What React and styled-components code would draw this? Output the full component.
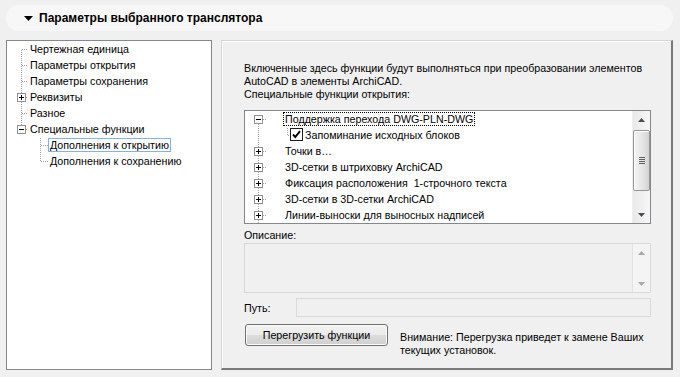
import React from 'react';
import styled, { createGlobalStyle } from 'styled-components';

const NAV_ITEMS = [
  { label: 'Чертежная единица', level: 0, pos: 'first' },
  { label: 'Параметры открытия', level: 0 },
  { label: 'Параметры сохранения', level: 0 },
  { label: 'Реквизиты', level: 0, expander: 'plus' },
  { label: 'Разное', level: 0 },
  { label: 'Специальные функции', level: 0, expander: 'minus', pos: 'last' },
  { label: 'Дополнения к открытию', level: 1, selected: true },
  { label: 'Дополнения к сохранению', level: 1, pos: 'last' },
];

const FUNCTIONS = [
  { label: 'Поддержка перехода DWG-PLN-DWG', expander: 'minus', focused: true, first: true },
  { label: 'Запоминание исходных блоков', child: true, checked: true },
  { label: 'Точки в…', expander: 'plus' },
  { label: '3D-сетки в штриховку ArchiCAD', expander: 'plus' },
  { label: 'Фиксация расположения  1-строчного текста', expander: 'plus' },
  { label: '3D-сетки в 3D-сетки ArchiCAD', expander: 'plus' },
  { label: 'Линии-выноски для выносных надписей', expander: 'plus' },
];

const DOT = '#a0a0a0';

function Dotted({ x1, y1, x2, y2 }) {
  return (
    <line
      x1={x1 + 0.5}
      y1={y1 + 0.5}
      x2={x2 + 0.5}
      y2={y2 + 0.5}
      stroke={DOT}
      strokeDasharray="1 1"
      shapeRendering="crispEdges"
    />
  );
}

function Expander({ cx, type }) {
  return (
    <g shapeRendering="crispEdges">
      <rect x={cx - 4 + 0.5} y={4.5} width={8} height={8} fill="#fff" stroke="#919191" />
      <line x1={cx - 2} y1={8.5} x2={cx + 3} y2={8.5} stroke="#000" />
      {type === 'plus' && <line x1={cx + 0.5} y1={6} x2={cx + 0.5} y2={11} stroke="#000" />}
    </g>
  );
}

function NavConnector({ item }) {
  if (item.level === 0) {
    const top = item.pos === 'first' ? 8 : 0;
    const bottom = item.pos === 'last' ? 8 : 16;
    return (
      <svg width="21" height="16">
        <Dotted x1={14} y1={top} x2={14} y2={bottom} />
        <Dotted x1={14} y1={8} x2={20} y2={8} />
        {item.expander && <Expander cx={14} type={item.expander} />}
      </svg>
    );
  }
  return (
    <svg width="41" height="16">
      <Dotted x1={33} y1={0} x2={33} y2={item.pos === 'last' ? 8 : 16} />
      <Dotted x1={33} y1={8} x2={40} y2={8} />
    </svg>
  );
}

function FunctionConnector({ item }) {
  if (item.child) {
    return (
      <svg width="45" height="16">
        <Dotted x1={13} y1={0} x2={13} y2={16} />
        <Dotted x1={42} y1={0} x2={42} y2={8} />
        <Dotted x1={42} y1={8} x2={44} y2={8} />
      </svg>
    );
  }
  return (
    <svg width="38" height="16">
      <Dotted x1={13} y1={item.first ? 8 : 0} x2={13} y2={16} />
      <Dotted x1={13} y1={8} x2={21} y2={8} />
      <Expander cx={13} type={item.expander} />
    </svg>
  );
}

function CheckBox() {
  return (
    <svg width="13" height="16" viewBox="0 0 13 16">
      <rect x="0.5" y="1.5" width="12" height="12" fill="#fff" stroke="#1c1c1c" shapeRendering="crispEdges" />
      <path d="M3 7.5 L5.3 10 L10 4.2" fill="none" stroke="#000" strokeWidth="1.9" />
    </svg>
  );
}

function Arrow({ dir, disabled }) {
  return (
    <svg width="7" height="4" viewBox="0 0 7 4">
      <polygon
        points={dir === 'up' ? '0,4 7,4 3.5,0' : '0,0 7,0 3.5,4'}
        fill={disabled ? '#a8a8a8' : '#4d4d4d'}
      />
    </svg>
  );
}

function ScrollBar({ disabled }) {
  return (
    <Scroll $disabled={disabled}>
      <ScrollButton>
        <Arrow dir="up" disabled={disabled} />
      </ScrollButton>
      <Track>
        {!disabled && (
          <Thumb>
            <Grip />
            <Grip />
            <Grip />
            <Grip />
          </Thumb>
        )}
      </Track>
      <ScrollButton>
        <Arrow dir="down" disabled={disabled} />
      </ScrollButton>
    </Scroll>
  );
}

export default function App() {
  return (
    <>
      <GlobalStyle />
      <Page>
        <Header>
          <svg width="9" height="5" viewBox="0 0 9 5">
            <polygon points="0,0 9,0 4.5,5" fill="#000" />
          </svg>
          <Title>Параметры выбранного транслятора</Title>
        </Header>
        <Body>
          <NavTree>
            {NAV_ITEMS.map((item) => (
              <TreeRow key={item.label}>
                <NavConnector item={item} />
                <TreeLabel $selected={item.selected}>{item.label}</TreeLabel>
              </TreeRow>
            ))}
          </NavTree>
          <Panel>
            <Intro>
              Включенные здесь функции будут выполняться при преобразовании элементов
              <br />
              AutoCAD в элементы ArchiCAD.
              <br />
              Специальные функции открытия:
            </Intro>
            <ListBox>
              <ListContent>
                {FUNCTIONS.map((item) => (
                  <TreeRow key={item.label}>
                    <FunctionConnector item={item} />
                    {item.checked && <CheckBox />}
                    <FunctionLabel $focused={item.focused}>{item.label}</FunctionLabel>
                  </TreeRow>
                ))}
              </ListContent>
              <ScrollBar />
            </ListBox>
            <FieldLabel>Описание:</FieldLabel>
            <Description>
              <DescriptionText />
              <ScrollBar disabled />
            </Description>
            <PathRow>
              <PathLabel>Путь:</PathLabel>
              <PathInput />
            </PathRow>
            <ActionRow>
              <Button type="button">Перегрузить функции</Button>
              <Note>
                Внимание: Перегрузка приведет к замене Ваших
                <br />
                текущих установок.
              </Note>
            </ActionRow>
          </Panel>
        </Body>
      </Page>
    </>
  );
}

const GlobalStyle = createGlobalStyle`
  html, body {
    margin: 0;
    padding: 0;
    background: #f0f0f0;
  }
  body {
    font-family: "Liberation Sans", Arial, sans-serif;
    font-size: 10.7px;
    color: #000;
  }
`;

const Page = styled.div`
  width: 680px;
  height: 377px;
  box-sizing: border-box;
  padding: 5px 7px 0 6px;
  display: flex;
  flex-direction: column;
`;

const Header = styled.div`
  height: 26px;
  border-radius: 13px;
  background: #f7f7f7;
  display: flex;
  align-items: center;
  gap: 6px;
  padding-left: 18px;
`;

const Title = styled.span`
  font-weight: bold;
  font-size: 12px;
`;

const Body = styled.div`
  margin-top: 9px;
  height: 330px;
  display: flex;
  gap: 9px;
`;

const NavTree = styled.div`
  width: 206px;
  box-sizing: border-box;
  border: 1px solid #828790;
  background: #fff;
`;

const TreeRow = styled.div`
  height: 16px;
  display: flex;
  align-items: center;
  white-space: pre;
  svg {
    flex: none;
    display: block;
  }
`;

const TreeLabel = styled.span`
  border: 1px solid ${(p) => (p.$selected ? '#7eb4ea' : 'transparent')};
  padding: 0 1px;
  line-height: 12px;
`;

const FunctionLabel = styled.span`
  border: 1px ${(p) => (p.$focused ? 'dotted #000' : 'solid transparent')};
  padding: 0 1px;
  line-height: 12px;
`;

const Panel = styled.div`
  flex: 1;
  box-sizing: border-box;
  border-style: solid;
  border-width: 1px 2px 2px 1px;
  border-color: #d5d5d5 #7a7a7a #7a7a7a #d5d5d5;
  box-shadow: inset 1px 1px 0 #fff;
  padding: 21px 20px 0 22px;
  display: flex;
  flex-direction: column;
`;

const Intro = styled.div`
  line-height: 13px;
  white-space: nowrap;
`;

const ListBox = styled.div`
  margin-top: 9px;
  height: 114px;
  box-sizing: border-box;
  border: 1px solid #828790;
  background: #fff;
  display: flex;
`;

const ListContent = styled.div`
  flex: 1;
  overflow: hidden;
`;

const Scroll = styled.div`
  width: 17px;
  flex: none;
  display: flex;
  flex-direction: column;
  background: ${(p) => (p.$disabled ? '#f4f4f4' : 'linear-gradient(to right, #e9e9e9, #f7f7f7)')};
  border-left: 1px solid ${(p) => (p.$disabled ? '#e3e3e3' : '#efefef')};
`;

const ScrollButton = styled.div`
  height: 17px;
  display: flex;
  align-items: center;
  justify-content: center;
  svg {
    display: block;
  }
`;

const Track = styled.div`
  flex: 1;
  padding-top: 2px;
`;

const Thumb = styled.div`
  height: 61px;
  box-sizing: border-box;
  border: 1px solid #979797;
  border-radius: 2px;
  background: linear-gradient(to right, #f4f4f4, #e4e4e4 60%, #d2d2d2);
  box-shadow: inset 1px 1px 0 #fff;
  display: flex;
  flex-direction: column;
  align-items: center;
  justify-content: center;
  gap: 1px;
`;

const Grip = styled.div`
  width: 6px;
  height: 1px;
  background: #5f5f5f;
`;

const FieldLabel = styled.div`
  margin-top: 5px;
  line-height: 13px;
`;

const Description = styled.div`
  margin-top: 1px;
  height: 50px;
  box-sizing: border-box;
  border: 1px solid #d9d9d9;
  display: flex;
`;

const DescriptionText = styled.div`
  flex: 1;
  background: #f0f0f0;
`;

const PathRow = styled.div`
  margin-top: 5px;
  height: 19px;
  display: flex;
  align-items: center;
`;

const PathLabel = styled.span`
  width: 52px;
  flex: none;
`;

const PathInput = styled.div`
  flex: 1;
  height: 19px;
  box-sizing: border-box;
  border: 1px solid #dadada;
  background: #f0f0f0;
`;

const ActionRow = styled.div`
  margin-top: 7px;
  display: flex;
  align-items: flex-start;
  gap: 12px;
`;

const Button = styled.button`
  width: 143px;
  height: 22px;
  margin-left: 1px;
  padding: 0;
  border: 1px solid #707070;
  border-radius: 3px;
  background: linear-gradient(#f2f2f2 0%, #ebebeb 50%, #dddddd 50%, #cfcfcf 100%);
  box-shadow: inset 0 0 0 1px #fbfbfb;
  font-family: "Liberation Sans", Arial, sans-serif;
  font-size: 10.7px;
  color: #000;
`;

const Note = styled.div`
  margin-top: 7px;
  line-height: 13px;
`;
